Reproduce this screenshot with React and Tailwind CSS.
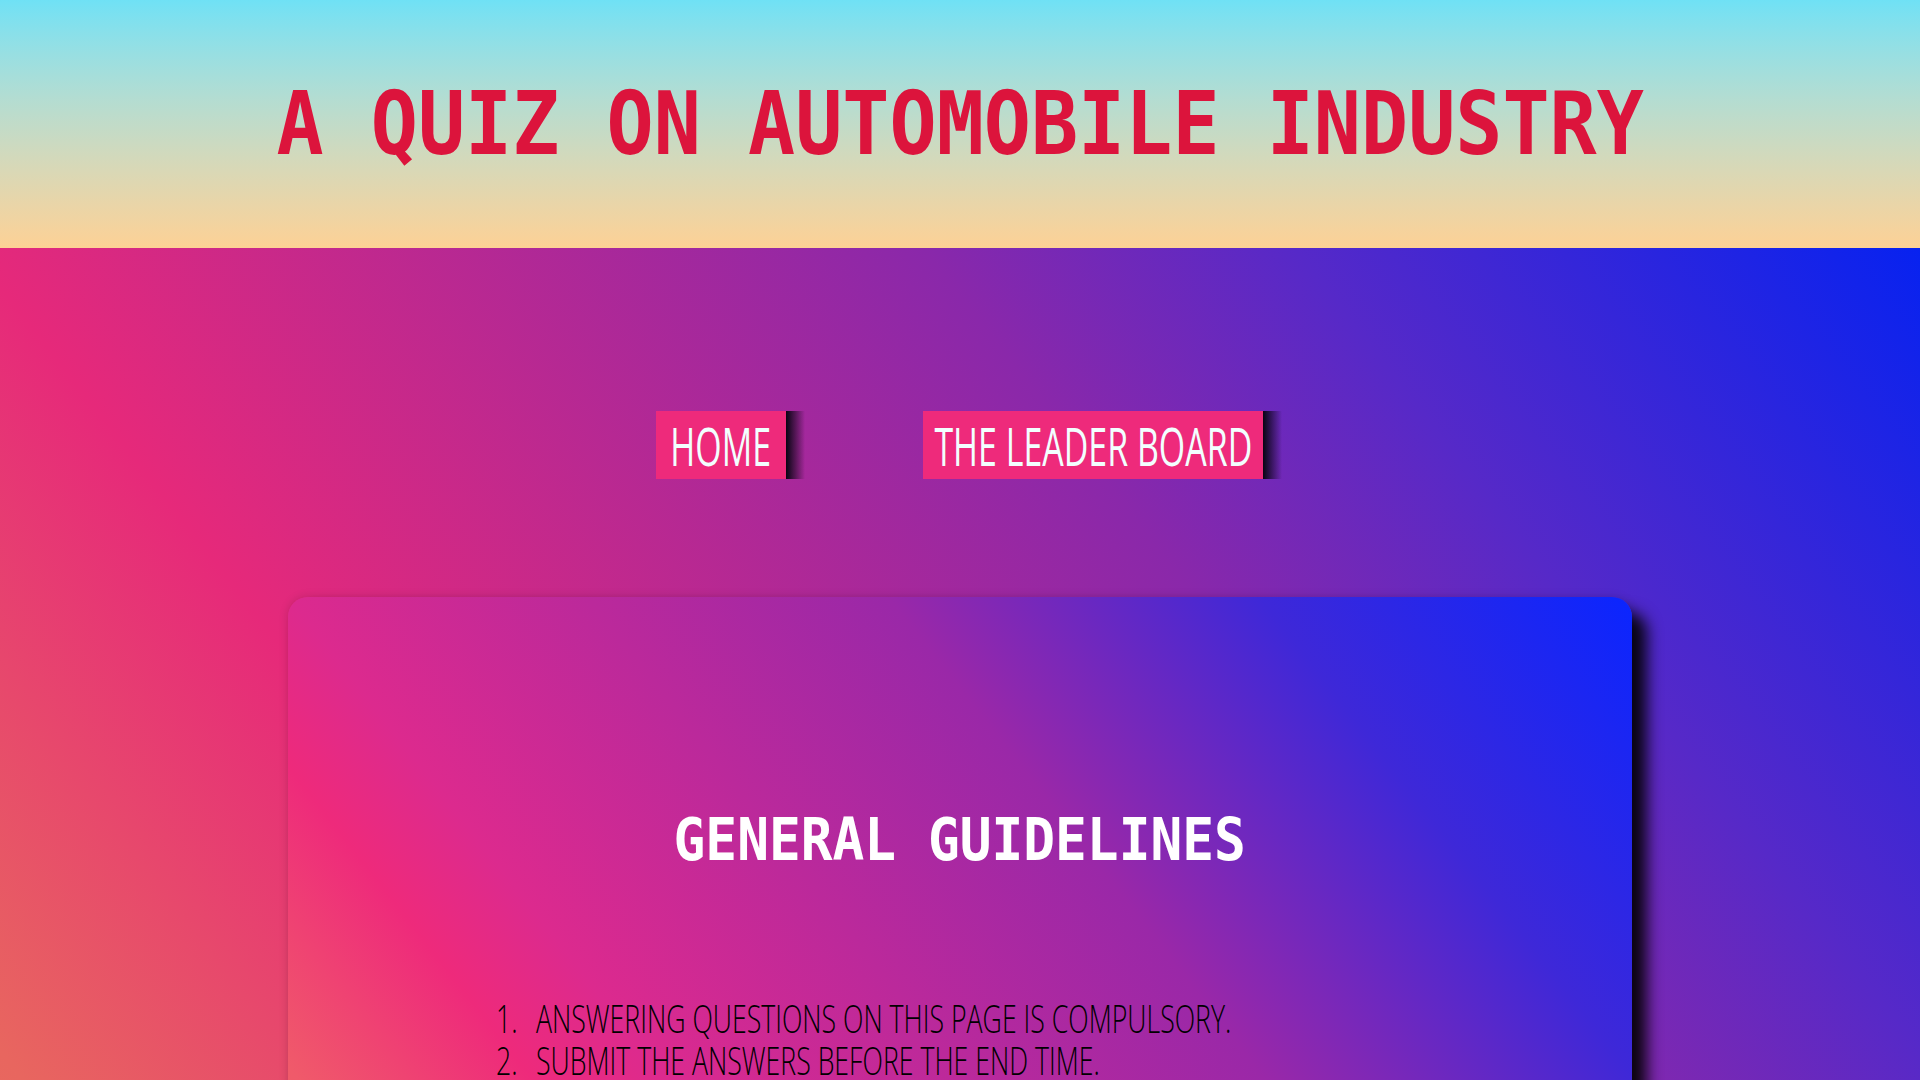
import React from "react"

const guidelines = [
  "ANSWERING QUESTIONS ON THIS PAGE IS COMPULSORY.",
  "SUBMIT THE ANSWERS BEFORE THE END TIME.",
]

function NavButton({ label, width }) {
  return (
    <div className="flex h-[68px]">
      <a
        href="#"
        className={`flex h-full items-center justify-center overflow-visible bg-[#ee2a7b] ${width}`}
      >
        <span className="whitespace-nowrap font-['Open_Sans',sans-serif] text-[53px] font-medium leading-none text-[#f2ffff] scale-x-[0.64]">
          {label}
        </span>
      </a>
      <div className="h-full w-[19px] bg-gradient-to-r from-[#080512] to-transparent" />
    </div>
  )
}

export default function App() {
  return (
    <div className="min-h-screen w-full">
      {/* header */}
      <header className="flex h-[248px] items-center justify-center bg-gradient-to-b from-[#6fe1f5] to-[#fdd195]">
        <h1 className="whitespace-nowrap font-['DejaVu_Sans_Mono',monospace] text-[88px] font-bold leading-none text-[#dc143c] scale-x-[0.89]">
          A QUIZ ON AUTOMOBILE INDUSTRY
        </h1>
      </header>

      <main className="h-[1500px] bg-[linear-gradient(52deg,#ec7a58_0px,#e8665f_430px,#e6297a_900px,#8a28aa_1650px,#5629c8_1943px,#0722f0_2437px)] pt-[163px]">
        <nav className="flex justify-center gap-[118px] pl-[18px]">
          <NavButton label="HOME" width="w-[130px]" />
          <NavButton label="THE LEADER BOARD" width="w-[340px]" />
        </nav>

        <section className="mx-auto mt-[118px] h-[1100px] w-[70%] overflow-hidden rounded-[20px] bg-[linear-gradient(52deg,#f2785a_0px,#f05a6a_388px,#ee2a7b_573px,#dc2a8e_678px,#9a28a8_1150px,#3e28d8_1443px,#0a25ff_1737px)] pt-[213px] shadow-[15px_15px_15px_rgba(0,0,0,0.9),0_0_10px_rgba(0,0,0,0.15)]">
          <h2 className="text-center font-['DejaVu_Sans_Mono',monospace] text-[59px] font-bold leading-none text-white">
            <span className="inline-block scale-x-[0.895] whitespace-nowrap">GENERAL GUIDELINES</span>
          </h2>

          <ol className="ml-[208px] mt-[128px] origin-left scale-x-[0.702] font-['Open_Sans',sans-serif] text-[38px] font-light leading-[42px] text-black">
            {guidelines.map((g, i) => (
              <li key={i} className="flex whitespace-nowrap">
                <span className="w-[57px] shrink-0">{i + 1}.</span>
                <span>{g}</span>
              </li>
            ))}
          </ol>
        </section>
      </main>
    </div>
  )
}
